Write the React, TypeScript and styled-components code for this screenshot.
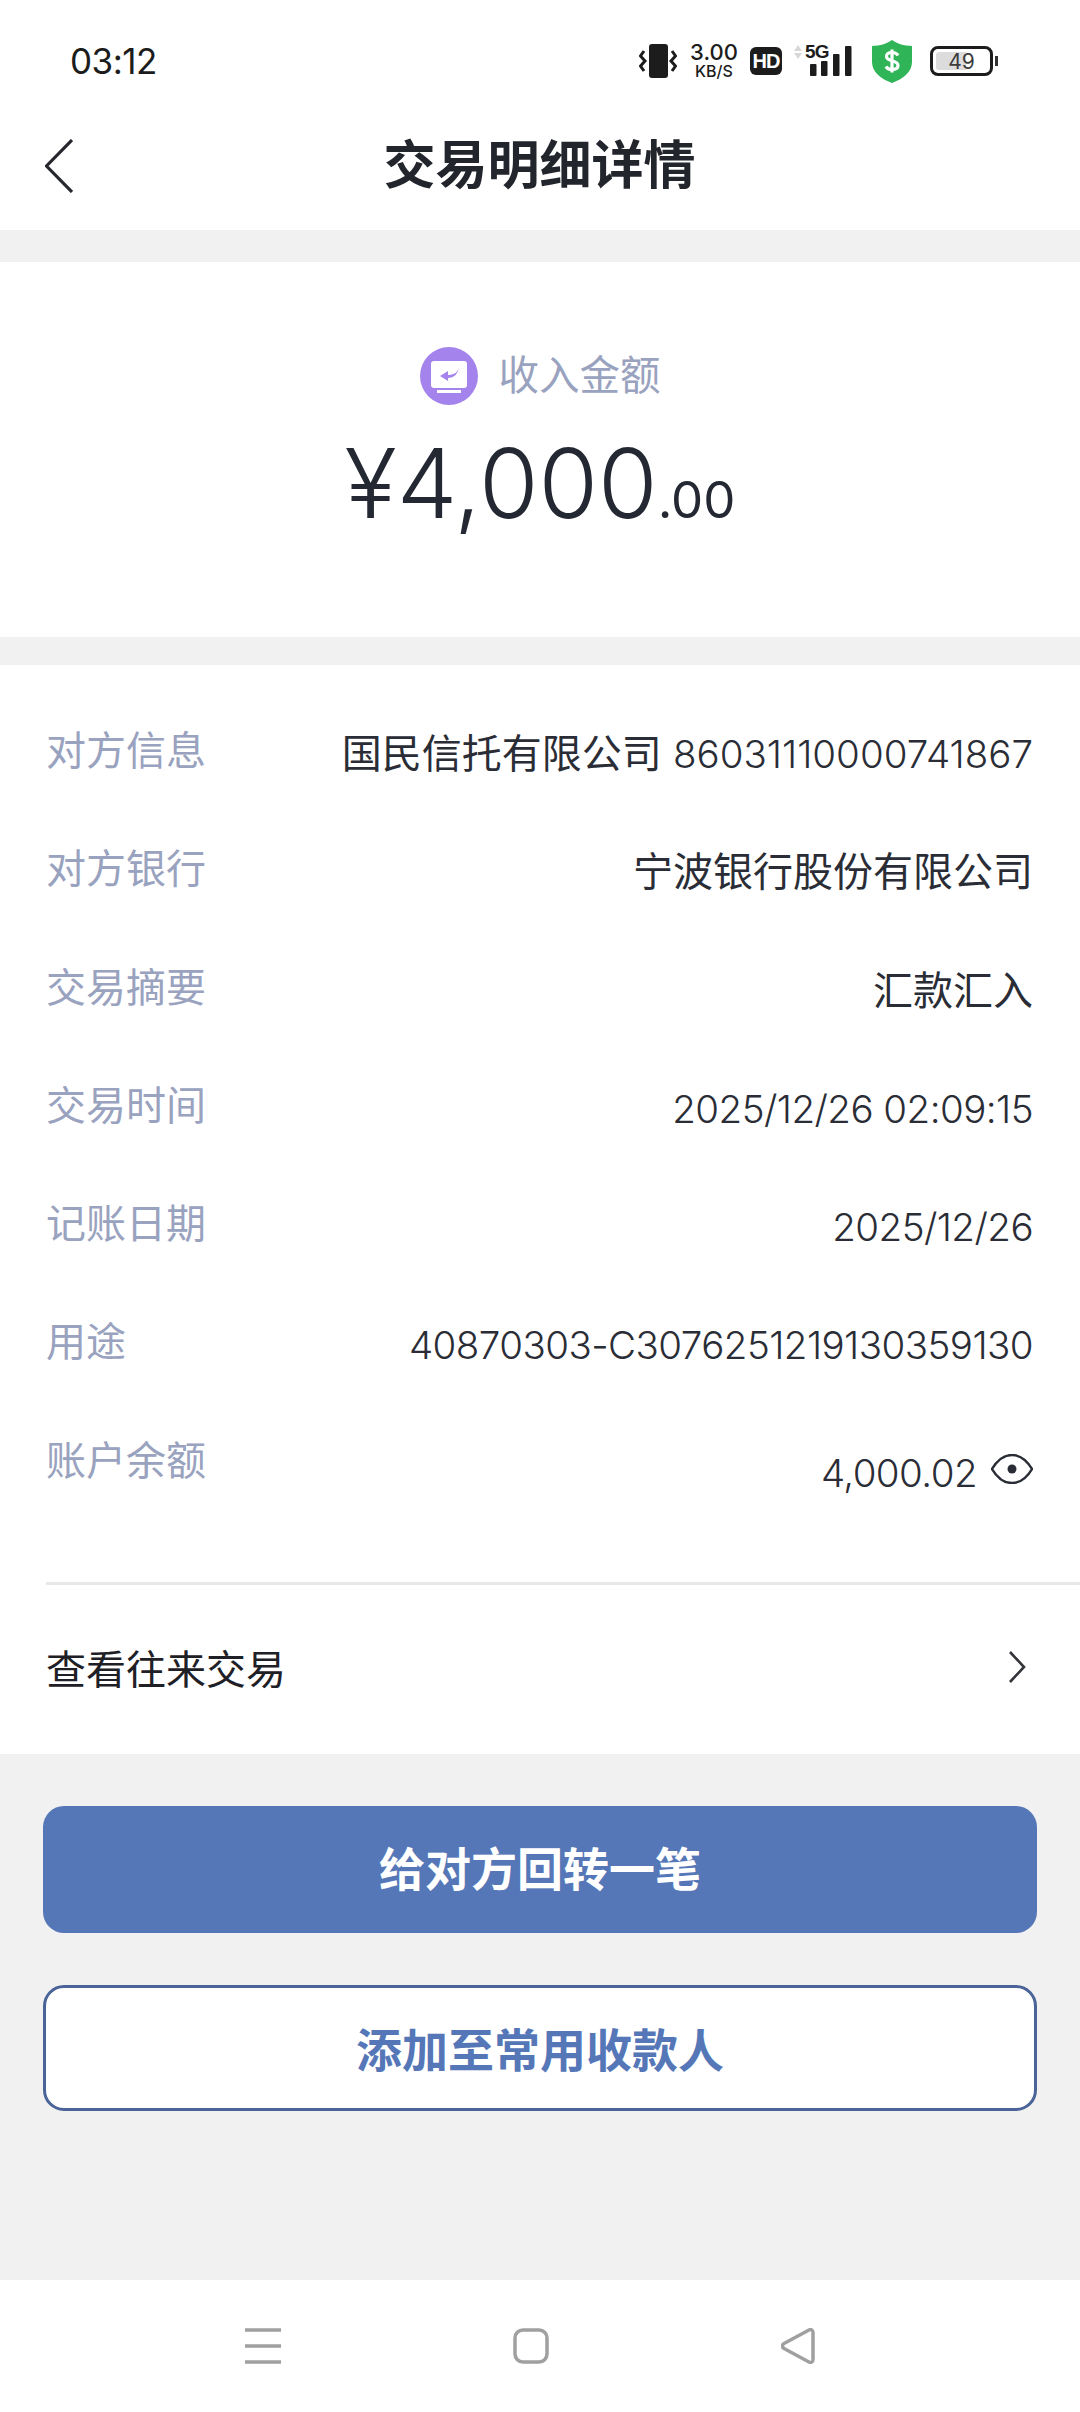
import styled, { createGlobalStyle } from 'styled-components'

const GlobalStyle = createGlobalStyle`
  html, body {
    margin: 0;
    padding: 0;
    background: #f1f1f1;
  }
  * {
    box-sizing: border-box;
  }
`

const Page = styled.div`
  width: 1080px;
  height: 2412px;
  display: flex;
  flex-direction: column;
  background: #f1f1f1;
  font-family: Inter, "Noto Sans CJK SC", sans-serif;
  color: #2a2d36;
  overflow: hidden;
`

const StatusBar = styled.div`
  height: 100px;
  flex: none;
  background: #fff;
  display: flex;
  align-items: center;
  padding: 22px 87px 0 70px;
  color: #1c1c1c;
`

const Time = styled.div`
  font-size: 35px;
  line-height: 40px;
  font-weight: 400;
  letter-spacing: -0.5px;
  margin-right: auto;
`

const SpeedBox = styled.div`
  width: 52px;
  margin: 0 10px 0 11px;
  display: flex;
  flex-direction: column;
  align-items: center;
  font-weight: 500;
`

const SpeedValue = styled.span`
  font-size: 22px;
  line-height: 21px;
`

const SpeedUnit = styled.span`
  font-size: 16px;
  line-height: 17px;
`

const HdBadge = styled.div`
  width: 32px;
  height: 28px;
  border-radius: 6px;
  background: #1c1c1c;
  color: #fff;
  font-family: "Liberation Sans", sans-serif;
  font-size: 20px;
  font-weight: 700;
  letter-spacing: -1px;
  display: flex;
  align-items: center;
  justify-content: center;
  margin-right: 11px;
`

const Network = styled.div`
  width: 62px;
  height: 34px;
  position: relative;
  margin-right: 17px;
`

const NetworkLabel = styled.span`
  position: absolute;
  left: 12px;
  top: -1px;
  font-family: "Liberation Sans", sans-serif;
  font-size: 19px;
  line-height: 18px;
  font-weight: 700;
  letter-spacing: -0.8px;
`

const SignalSvg = styled.svg`
  position: absolute;
  inset: 0;
`

const Battery = styled.div`
  width: 63px;
  height: 30px;
  margin-left: 18px;
  border: 3px solid #1c1c1c;
  border-radius: 8px;
  padding: 3px;
  position: relative;
  display: flex;
`

const BatteryFill = styled.div`
  width: 58%;
  background: #dcdcdc;
  border-radius: 3px 0 0 3px;
`

const BatteryText = styled.span`
  position: absolute;
  inset: 0;
  display: flex;
  align-items: center;
  justify-content: center;
  font-size: 21px;
  color: #3c3c3c;
`

const BatteryNub = styled.div`
  position: absolute;
  right: -8px;
  top: 7px;
  width: 3px;
  height: 10px;
  background: #333;
`

const Header = styled.div`
  height: 130px;
  flex: none;
  background: #fff;
  display: grid;
  grid-template-columns: 46px 1fr 46px;
  align-items: center;
  padding: 0 46px 0 45px;
`

const BackButton = styled.div`
  display: flex;
  align-items: center;
  margin-top: 2px;
`

const Title = styled.h1`
  margin: 2px 0 0;
  grid-column: 2;
  text-align: center;
  font-size: 52px;
  line-height: 60px;
  font-weight: 700;
  color: #22252c;
`

const Hero = styled.section`
  margin-top: 32px;
  height: 375px;
  flex: none;
  background: #fff;
  display: flex;
  flex-direction: column;
  align-items: center;
  padding-top: 85px;
`

const HeroLabel = styled.div`
  display: flex;
  align-items: center;
  gap: 21px;
  height: 58px;
  font-size: 40.5px;
  line-height: 58px;
  color: #99a2be;
`

const Amount = styled.div`
  margin-top: 20px;
  font-size: 96.5px;
  line-height: 116px;
  font-weight: 320;
  color: #242832;
  display: flex;
  align-items: baseline;
`

const Cents = styled.span`
  font-size: 51px;
  font-weight: 400;
`

const Details = styled.section`
  margin-top: 28px;
  flex: none;
  background: #fff;
  height: 1089px;
  display: flex;
  flex-direction: column;
  padding-top: 56px;
`

const Rows = styled.div`
  padding: 0 47px 0 46px;
  height: 861px;
`

const Row = styled.div`
  height: 118.3px;
  display: flex;
  justify-content: space-between;
  align-items: flex-start;
`

const Label = styled.span`
  font-size: 40px;
  line-height: 60px;
  color: #99a2be;
`

const Value = styled.span<{ $low?: boolean }>`
  font-size: 40px;
  line-height: 60px;
  margin-top: ${(p) => (p.$low ? '12px' : '3px')};
  color: #2a2d36;
  display: flex;
  align-items: center;
  gap: 14px;
  white-space: pre;
`

const Latin = styled.span<{ $loose?: boolean }>`
  font-size: 38.5px;
  font-weight: 340;
  letter-spacing: ${(p) => (p.$loose ? '0' : '-0.55px')};
`

const EyeSvg = styled.svg`
  margin-top: -8px;
`

const Divider = styled.div`
  height: 3px;
  margin-left: 46px;
  background: #e8e8e8;
`

const LinkRow = styled.div`
  flex: 1;
  display: flex;
  align-items: center;
  justify-content: space-between;
  padding: 0 54px 5px 46px;
  font-size: 40px;
  color: #1e2026;
`

const Actions = styled.div`
  flex: 1;
  display: flex;
  flex-direction: column;
  gap: 52px;
  padding: 52px 43px 0;
`

const Button = styled.div<{ $outline?: boolean }>`
  height: ${(p) => (p.$outline ? '126px' : '127px')};
  border-radius: 21px;
  padding-bottom: ${(p) => (p.$outline ? '3px' : '7px')};
  display: flex;
  align-items: center;
  justify-content: center;
  font-size: 46px;
  font-weight: 700;
  background: ${(p) => (p.$outline ? '#fff' : '#5577b8')};
  color: ${(p) => (p.$outline ? '#5577b8' : '#fff')};
  border: ${(p) => (p.$outline ? '3px solid #4a6398' : 'none')};
`

const NavBar = styled.div`
  height: 132px;
  flex: none;
  background: #fff;
  display: flex;
  align-items: flex-start;
  padding: 48px 0 0 245px;
  gap: 232px;
`

function VibrateIcon() {
  return (
    <svg width="38" height="34" viewBox="0 0 38 34">
      <rect x="10" y="0" width="19" height="34" rx="3" fill="#1c1c1c" />
      <path d="M5 7 L1.5 12 L6 17 L1.5 22 L5 27" fill="none" stroke="#1c1c1c" strokeWidth="3" />
      <path d="M33 7 L36.5 12 L32 17 L36.5 22 L33 27" fill="none" stroke="#1c1c1c" strokeWidth="3" />
    </svg>
  )
}

function SignalIcon() {
  return (
    <SignalSvg width="62" height="34" viewBox="0 0 62 34">
      <path d="M5 1 L9 7 H1 Z M5 15 L9 9 H1 Z" fill="#d8d8d8" />
      <rect x="17" y="20" width="6.5" height="12" rx="1" fill="#1c1c1c" />
      <rect x="28" y="17" width="6.5" height="15" rx="1" fill="#1c1c1c" />
      <rect x="40" y="10" width="6.5" height="22" rx="1" fill="#1c1c1c" />
      <rect x="52" y="2" width="6.5" height="30" rx="1" fill="#1c1c1c" />
    </SignalSvg>
  )
}

function ShieldIcon() {
  return (
    <svg width="40" height="43" viewBox="0 0 40 43">
      <path
        d="M20 0 C24 3 32 6 40 6 V22 C40 32 31 39 20 43 C9 39 0 32 0 22 V6 C8 6 16 3 20 0 Z"
        fill="#2fb457"
      />
      <path
        d="M26 15.5 C25 13.5 23 12.5 20 12.5 C16.5 12.5 14.5 14.2 14.5 16.5 C14.5 22 26 19.5 26 25.5 C26 28 23.5 29.5 20 29.5 C17 29.5 15 28.5 14 26.5 M20 9.5 V32.5"
        fill="none"
        stroke="#fff"
        strokeWidth="3.2"
      />
    </svg>
  )
}

function IncomeIcon() {
  return (
    <svg width="58" height="58" viewBox="0 0 58 58">
      <circle cx="29" cy="29" r="29" fill="#a583ec" />
      <rect x="11" y="14" width="36" height="27" rx="3" fill="#fff" />
      <rect x="17" y="43" width="24" height="3" fill="#fff" />
      <path
        d="M39 20 C38 26 33 28 28 28 V24 L20 29 L28 34 V31 C34 31 38 27 39 20 Z"
        fill="#a583ec"
      />
    </svg>
  )
}

function EyeIcon() {
  return (
    <EyeSvg width="42" height="30" viewBox="0 0 42 30">
      <path
        d="M1 15 C7 5 14 1 21 1 C28 1 35 5 41 15 C35 25 28 29 21 29 C14 29 7 25 1 15 Z"
        fill="none"
        stroke="#2a2d36"
        strokeWidth="2.4"
      />
      <circle cx="21" cy="15" r="4.5" fill="#2a2d36" />
    </EyeSvg>
  )
}

const rows = [
  { label: '对方信息', text: '国民信托有限公司 ', num: '86031110000741867', loose: true },
  { label: '对方银行', text: '宁波银行股份有限公司', num: '' },
  { label: '交易摘要', text: '汇款汇入', num: '' },
  { label: '交易时间', text: '', num: '2025/12/26 02:09:15' },
  { label: '记账日期', text: '', num: '2025/12/26' },
  { label: '用途', text: '', num: '40870303-C3076251219130359130' },
]

export default function App() {
  return (
    <Page>
      <GlobalStyle />
      <StatusBar>
        <Time>03:12</Time>
        <VibrateIcon />
        <SpeedBox>
          <SpeedValue>3.00</SpeedValue>
          <SpeedUnit>KB/S</SpeedUnit>
        </SpeedBox>
        <HdBadge>HD</HdBadge>
        <Network>
          <SignalIcon />
          <NetworkLabel>5G</NetworkLabel>
        </Network>
        <ShieldIcon />
        <Battery>
          <BatteryFill />
          <BatteryText>49</BatteryText>
          <BatteryNub />
        </Battery>
      </StatusBar>

      <Header>
        <BackButton>
          <svg width="28" height="54" viewBox="0 0 28 54">
            <path d="M27 1 L1.5 27 L27 53" fill="none" stroke="#26282e" strokeWidth="3.2" />
          </svg>
        </BackButton>
        <Title>交易明细详情</Title>
      </Header>

      <Hero>
        <HeroLabel>
          <IncomeIcon />
          收入金额
        </HeroLabel>
        <Amount>
          ¥4,000<Cents>.00</Cents>
        </Amount>
      </Hero>

      <Details>
        <Rows>
          {rows.map((row) => (
            <Row key={row.label}>
              <Label>{row.label}</Label>
              <Value>
                <span>
                  {row.text}
                  <Latin $loose={row.loose}>{row.num}</Latin>
                </span>
              </Value>
            </Row>
          ))}
          <Row>
            <Label>账户余额</Label>
            <Value $low>
              <Latin>4,000.02</Latin>
              <EyeIcon />
            </Value>
          </Row>
        </Rows>
        <Divider />
        <LinkRow>
          查看往来交易
          <svg width="18" height="32" viewBox="0 0 18 32">
            <path d="M2 1 L16 16 L2 31" fill="none" stroke="#33353b" strokeWidth="2.6" />
          </svg>
        </LinkRow>
      </Details>

      <Actions>
        <Button>给对方回转一笔</Button>
        <Button $outline>添加至常用收款人</Button>
      </Actions>

      <NavBar>
        <svg width="36" height="36" viewBox="0 0 36 36">
          <path d="M0 2 H36 M0 18 H36 M0 34 H36" stroke="#a0a0a0" strokeWidth="3.5" />
        </svg>
        <svg width="36" height="36" viewBox="0 0 36 36">
          <rect x="2" y="2" width="32" height="32" rx="8" fill="none" stroke="#a0a0a0" strokeWidth="3.5" />
        </svg>
        <svg width="34" height="36" viewBox="0 0 34 36">
          <path
            d="M32 4.5 V31.5 C32 34 30 35 28 34 L3 20.5 C1 19.5 1 16.5 3 15.5 L28 2 C30 1 32 2 32 4.5 Z"
            fill="none"
            stroke="#a0a0a0"
            strokeWidth="3.5"
          />
        </svg>
      </NavBar>
    </Page>
  )
}
